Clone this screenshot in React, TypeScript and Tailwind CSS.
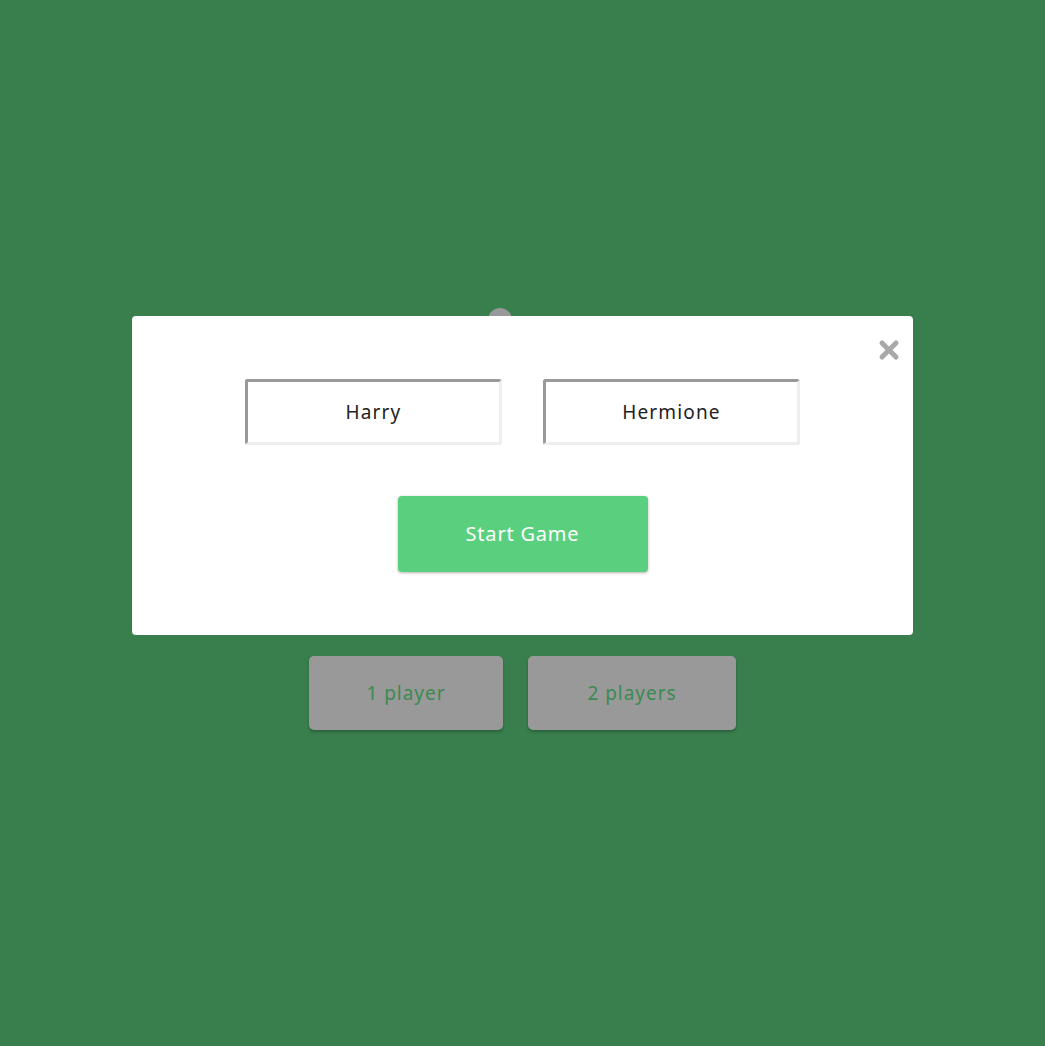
export default function App() {
  const font = { fontFamily: '"Noto Sans", "Open Sans", sans-serif' };

  return (
    <div
      className="relative w-full h-[1046px] bg-[#387f4d] overflow-hidden"
      style={font}
    >
      {/* page behind the modal */}
      <div className="flex flex-col items-center pt-[308px]">
        <div className="w-6 h-6 rounded-full bg-[#999] ml-[-45px]" />
        <div className="flex gap-[25px] mt-[324px]">
          <button className="w-[194px] h-[74px] rounded-[5px] bg-[#999] text-[#3b8a52] text-[19px] tracking-[0.05em] shadow-[0_2px_3px_rgba(0,0,0,0.25)]">
            1 player
          </button>
          <button className="w-[208px] h-[74px] rounded-[5px] bg-[#999] text-[#3b8a52] text-[19px] tracking-[0.05em] shadow-[0_2px_3px_rgba(0,0,0,0.25)]">
            2 players
          </button>
        </div>
      </div>

      {/* modal */}
      <div className="absolute inset-0 flex justify-center pt-[316px]">
        <div className="relative w-[781px] h-[319px] bg-white rounded-[4px] flex flex-col items-center pt-[63px]">
          <button className="absolute right-[12px] top-[22px] w-6 h-6 flex items-center justify-center">
            <svg width="24" height="24" viewBox="0 0 24 24">
              <path
                d="M5 5 L19 19 M19 5 L5 19"
                stroke="#a8a8a8"
                strokeWidth="5"
                strokeLinecap="round"
              />
            </svg>
          </button>
          <div className="flex gap-[41px]">
            <input
              defaultValue="Harry"
              className="w-[257px] h-[66px] rounded-[3px] border-[3px] border-t-[#999] border-l-[#999] border-b-[#eee] border-r-[#eee] text-center text-[19px] tracking-[0.06em] text-[#222] outline-none"
            />
            <input
              defaultValue="Hermione"
              className="w-[257px] h-[66px] rounded-[3px] border-[3px] border-t-[#999] border-l-[#999] border-b-[#eee] border-r-[#eee] text-center text-[19px] tracking-[0.06em] text-[#222] outline-none"
            />
          </div>
          <button className="mt-[51px] w-[250px] h-[76px] rounded-[4px] bg-[#5ad07e] text-white text-[20px] tracking-[0.04em] shadow-[0_1px_3px_rgba(0,0,0,0.3)]">
            Start Game
          </button>
        </div>
      </div>
    </div>
  );
}
